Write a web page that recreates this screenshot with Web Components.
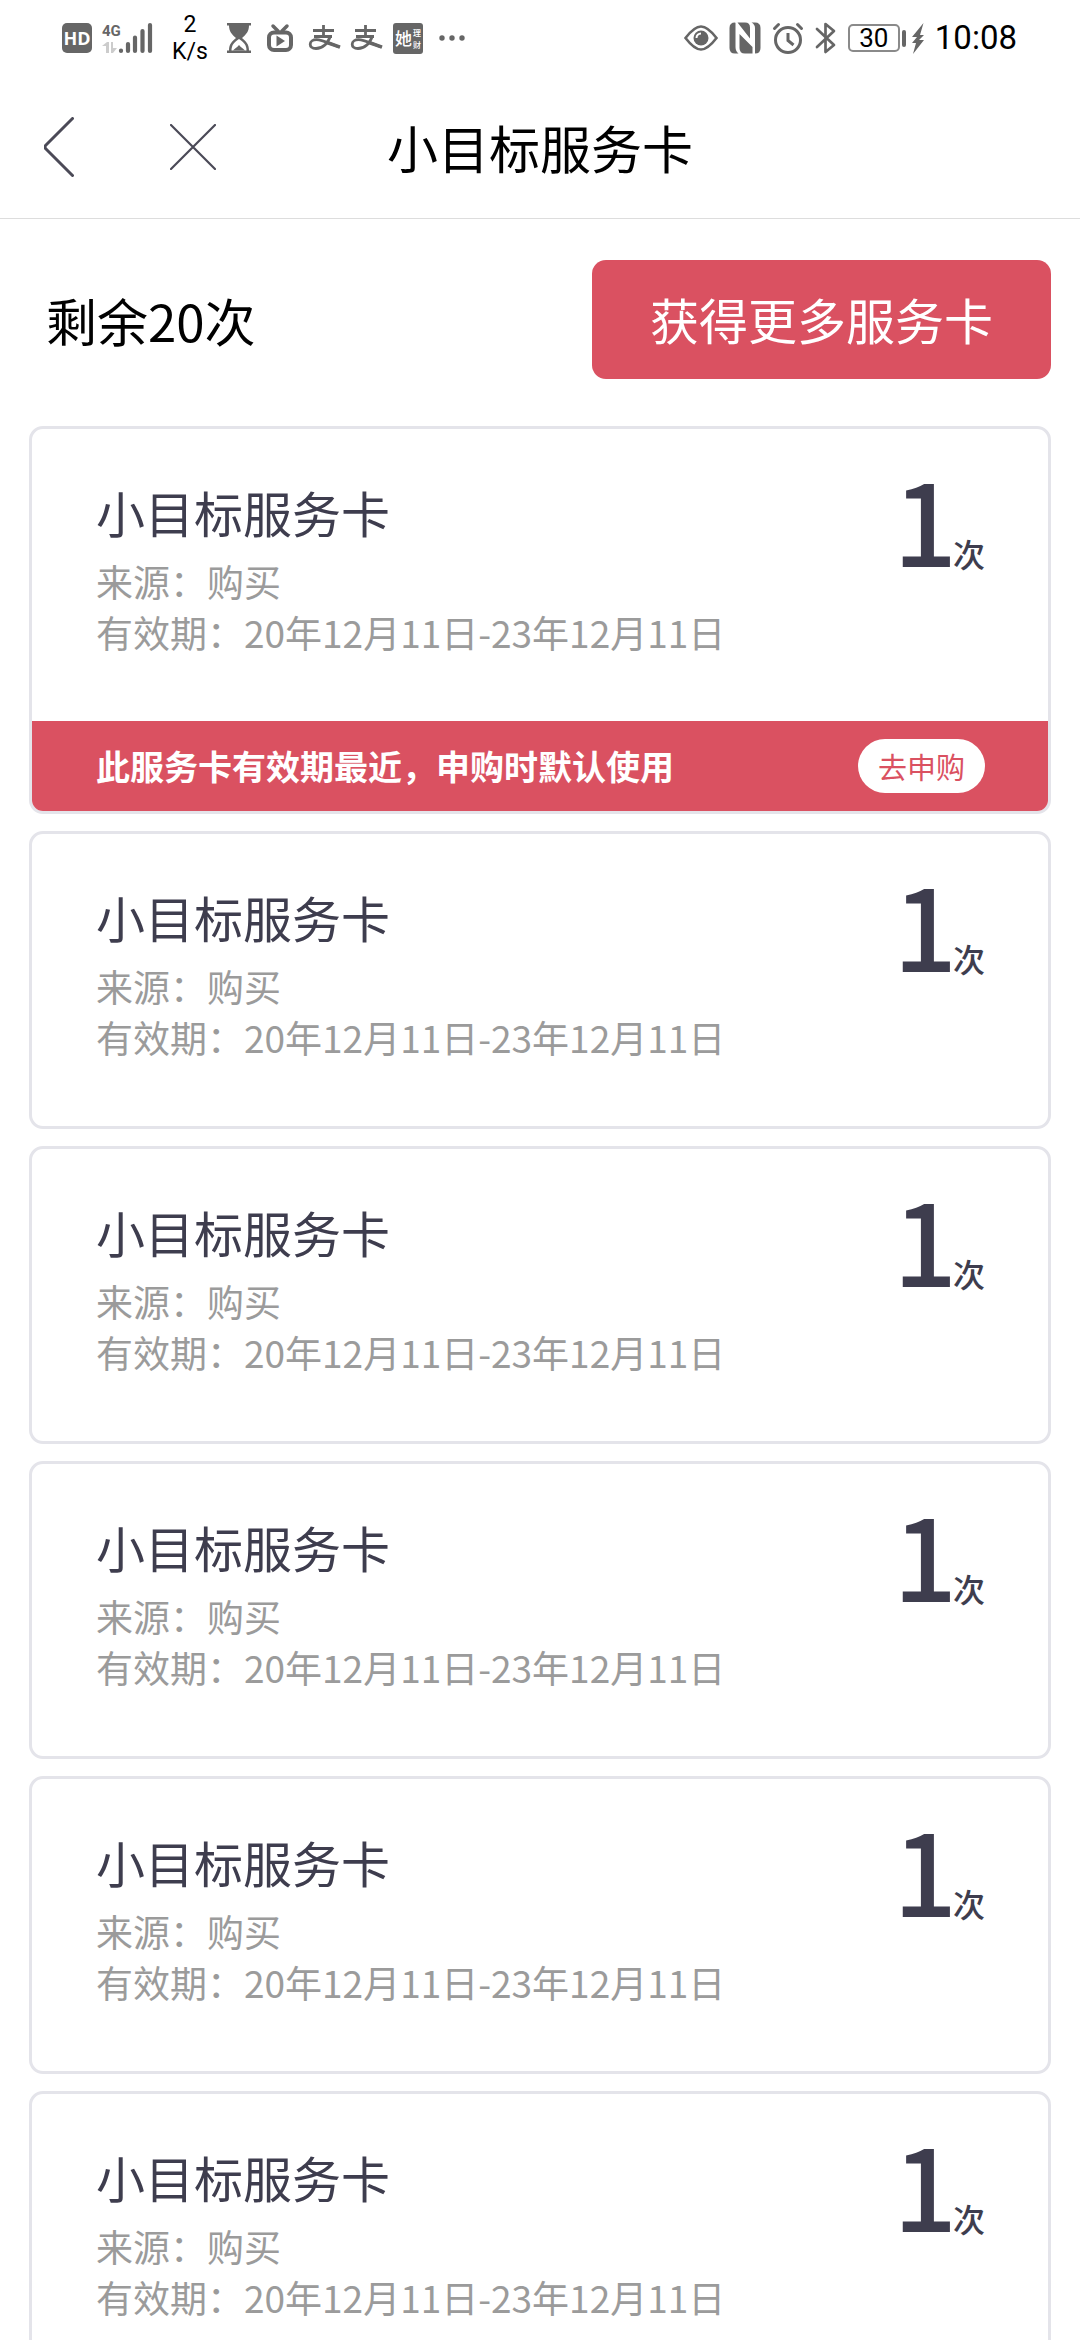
<!DOCTYPE html>
<html lang="zh-CN">
<head>
<meta charset="utf-8">
<meta name="viewport" content="width=device-width, initial-scale=1">
<title>小目标服务卡</title>
<style>
html { scrollbar-width: none; }
body {
  margin: 0;
  background: #fff;
  color: #000;
  font-family: "Noto Sans CJK SC", "Noto Sans", sans-serif;
  --accent: #da5161;
  --ink: #3e3d4e;
  --muted: #9b9b9b;
  --line: #e4e4ea;
}
</style>
</head>
<body>
<service-page></service-page>

<template id="status-tpl">
<style>
:host { display: flex; align-items: center; justify-content: space-between; height: 76px; padding: 0 63px 0 62px; box-sizing: border-box; font-family: Roboto, sans-serif; color: #000; }
.group { display: flex; align-items: center; }
svg { display: block; flex: none; fill: #666; overflow: visible; }
.s { fill: none; stroke: #666; }
.left { gap: 10px; }
.speed { display: flex; flex-direction: column; align-items: center; width: 54px; font-size: 23px; line-height: 27px; }
.apps { display: flex; align-items: center; gap: 16px; }
.logos { display: flex; align-items: center; gap: 10px; }
.right { gap: 11px; }
.power { display: flex; align-items: center; gap: 2px; }
.battery { width: 52px; height: 28px; box-sizing: border-box; border: 2px solid #8a8a8a; border-radius: 5px; font-size: 26px; line-height: 25px; text-align: center; }
.tip { width: 4px; height: 17px; border-radius: 2px; background: #666; margin-right: 4px; }
.time { font-size: 33px; line-height: 40px; }
</style>
<div class="group left">
  <svg width="30" height="30" viewBox="0 0 30 30"><rect width="30" height="30" rx="5"/><text x="15" y="22" text-anchor="middle" font-family="Open Sans" font-weight="700" font-size="18" fill="#fff" stroke="none">HD</text></svg>
  <svg width="51" height="32" viewBox="0 0 51 32">
    <text x="0" y="14" font-family="Roboto" font-weight="700" font-size="15">4G</text>
    <path fill="#ccc" d="M4 31V24H0l5-4h2v11zM9 20h2v6h4l-4 5H9z"/>
    <g class="s" stroke-width="4.2" stroke-linecap="round"><path d="M19 28.500v.5M26 22v7M33 15.500v13.500M40.500 9v20M48 3v26"/></g>
  </svg>
  <div class="speed"><span>2</span><span>K/s</span></div>
  <div class="apps">
    <svg width="24" height="30" viewBox="0 0 24 30"><path d="M0 0h24v2.500h-2c0 6-3 9-7 12.500 4 3.500 7 6 7 12.500h2V30H0v-2.500h2C2 21 5 18.500 9 15 5 11.500 2 8.500 2 2.500H0z"/><path fill="#fff" d="M12 16c-5 3.500-7.500 6-7.500 11.500h15C19.500 22 17 19.500 12 16z"/><path d="M6 27.500c1.500-2 4-3 6-5.500 2 2.500 4.500 3.500 6 5.500z"/></svg>
    <svg width="26" height="28" viewBox="0 0 26 28"><path class="s" stroke-width="3.500" stroke-linecap="round" d="M6 2l5 5M20 2l-5 5"/><rect class="s" x="2" y="8.500" width="22" height="17.500" rx="5" stroke-width="4"/><path d="M9.500 11.500l8.500 5.500-8.500 5.500z"/></svg>
    <div class="logos">
      <svg width="32" height="26" viewBox="0 0 32 26"><g class="s"><path stroke-width="2.800" d="M4 5.500h21M14.500 0v11M5 11.500h18"/><path stroke-width="2.800" d="M21.500 11C18 20 12 23.500 7 23.500c-4 0-5.800-2-5.800-4.300 0-3 3-4.500 6.300-4.500 4 0 10 2.500 23 7.300"/><path stroke-width="3.500" d="M18 17.500l13 4.700"/></g></svg>
      <svg width="32" height="26" viewBox="0 0 32 26"><g class="s"><path stroke-width="2.800" d="M4 5.500h21M14.500 0v11M5 11.500h18"/><path stroke-width="2.800" d="M21.500 11C18 20 12 23.500 7 23.500c-4 0-5.800-2-5.800-4.300 0-3 3-4.500 6.300-4.500 4 0 10 2.500 23 7.300"/><path stroke-width="3.500" d="M18 17.500l13 4.700"/></g></svg>
      <svg width="30" height="31" viewBox="0 0 30 31"><rect width="30" height="31" rx="3"/><g fill="#fff" font-family="Noto Sans CJK SC" font-weight="500"><text x="2" y="22" font-size="17">她</text><text x="20" y="13" font-size="8">理</text><text x="20" y="25" font-size="8">财</text></g></svg>
    </div>
    <svg width="26" height="6" viewBox="0 0 26 6"><circle cx="3" cy="3" r="2.700"/><circle cx="13" cy="3" r="2.700"/><circle cx="23" cy="3" r="2.700"/></svg>
  </div>
</div>
<div class="group right">
  <svg width="34" height="26" viewBox="0 0 34 26"><path class="s" stroke-width="2.600" d="M1.500 13C8 4.500 12 1.500 17 1.500S26 4.500 32.500 13C26 21.500 22 24.500 17 24.500S8 21.500 1.500 13z"/><circle cx="17" cy="13" r="7.500"/><path class="s" style="stroke:#fff" stroke-width="2" d="M12.500 13a4.500 4.500 0 0 1 4.500-4.500"/></svg>
  <svg width="32" height="32" viewBox="0 0 32 32"><path d="M6 .5Q.5.500.500 6v20q0 5.500 5.500 5.500h3.500Q6.500 29 6.500 25V1zM8.500.5H16q5 0 5 5v11zM10.500 12 23.500 25 23.500 31.500H16q-5.500 0-5.500-5.500zM22.500.5H26q5.500 0 5.500 5.500v20q0 5.500-5.500 5.500V6q0-3.500-3.500-5.500z"/></svg>
  <svg width="32" height="32" viewBox="0 0 32 32"><g class="s"><circle cx="16" cy="18" r="12.500" stroke-width="3"/><path stroke-width="3" stroke-linecap="round" d="M2.500 6.500l4-4M29.500 6.500l-4-4"/><path stroke-width="3" d="M16 11v7.500l5.500 4.500"/></g></svg>
  <svg width="22" height="32" viewBox="0 0 22 32"><path class="s" stroke-width="2.700" stroke-linejoin="round" stroke-linecap="round" d="M2 7l17 16-8.500 7V2L19 9 2 25"/></svg>
  <div class="power">
    <div class="battery">30</div><div class="tip"></div>
    <svg width="12" height="31" viewBox="0 0 12 31"><path d="M11.500 0 0 14h5L0 20h4L1 31l11-14H7l5-5H8z"/></svg>
  </div>
  <span class="time">10:08</span>
</div>
</template>

<template id="nav-tpl">
<style>
:host { display: grid; grid-template-columns: 1fr auto 1fr; align-items: center; height: 143px; box-sizing: border-box; border-bottom: 1px solid #ddd; }
nav { display: flex; align-items: center; gap: 72px; padding-left: 32px; }
button { border: 0; background: none; padding: 12px; margin: 0; display: block; }
svg { display: block; fill: none; stroke: #4b4a57; }
h1 { margin: 0; font-size: 51px; line-height: 60px; font-weight: 400; }
</style>
<nav>
  <button aria-label="返回"><svg width="30" height="60" viewBox="0 0 30 60"><path stroke-width="3" stroke-linecap="round" stroke-linejoin="round" d="M28.500 1.500 1.500 28.500Q.500 30 1.500 31.500L28.500 58.500"/></svg></button>
  <button aria-label="关闭"><svg width="46" height="46" viewBox="0 0 46 46"><path stroke-width="2.200" stroke-linecap="round" d="M1 1l44 44M45 1 1 45"/></svg></button>
</nav>
<h1><slot></slot></h1>
</template>

<template id="summary-tpl">
<style>
:host { display: flex; align-items: center; justify-content: space-between; padding: 41px 29px 47px 46px; }
p { margin: 0; font-size: 51px; line-height: 60px; }
button { border: 0; margin: 0; padding: 28px 58px 30px; border-radius: 14px; background: var(--accent); color: #fff; font-family: inherit; font-size: 49px; line-height: 61px; }
</style>
<p><slot></slot></p>
<button>获得更多服务卡</button>
</template>

<template id="card-tpl">
<style>
:host { display: block; border: 3px solid var(--line); border-radius: 14px; overflow: hidden; }
.body { display: flex; justify-content: space-between; align-items: flex-start; padding: 53px 63px 63px 64px; }
h2 { margin: 0 0 14px; font-size: 49px; line-height: 60px; font-weight: 400; color: var(--ink); }
p { margin: 0; font-size: 37px; line-height: 51px; color: var(--muted); }
.count { display: flex; align-items: baseline; color: var(--ink); font-weight: 500; font-size: 112px; line-height: 72px; }
.num { margin-right: -4px; }
.unit { font-size: 32px; }
</style>
<div class="body">
  <div><h2></h2><p class="source"></p><p class="period"></p></div>
  <div class="count"><span class="num"></span><span class="unit">次</span></div>
</div>
<slot></slot>
</template>

<template id="notice-tpl">
<style>
:host { display: flex; align-items: center; justify-content: space-between; height: 90px; padding: 0 63px 0 64px; background: var(--accent); color: #fff; font-size: 34px; line-height: 50px; font-weight: 700; }
button { border: 0; margin: 0; padding: 0 20px; height: 54px; border-radius: 27px; background: #fff; color: var(--accent); font-family: inherit; font-size: 29px; line-height: 50px; }
</style>
<span><slot></slot></span>
<button>去申购</button>
</template>

<template id="page-tpl">
<style>
:host { display: block; }
main { display: flex; flex-direction: column; gap: 17px; padding: 0 29px 17px; }
</style>
<status-bar></status-bar>
<nav-bar>小目标服务卡</nav-bar>
<summary-row>剩余20次</summary-row>
<main></main>
</template>

<script>
class Base extends HTMLElement {
  constructor() {
    super();
    this.attachShadow({ mode: "open" }).append(
      document.getElementById(this.constructor.tpl).content.cloneNode(true));
  }
}
class StatusBar extends Base { static tpl = "status-tpl"; }
class NavBar extends Base { static tpl = "nav-tpl"; }
class SummaryRow extends Base { static tpl = "summary-tpl"; }
class CardNotice extends Base { static tpl = "notice-tpl"; }
class ServiceCard extends Base {
  static tpl = "card-tpl";
  set data(d) {
    const q = s => this.shadowRoot.querySelector(s);
    q("h2").textContent = d.name;
    q(".source").textContent = "来源：" + d.source;
    q(".period").textContent = "有效期：" + d.from + "-" + d.to;
    q(".num").textContent = d.count;
  }
}
class ServicePage extends Base {
  static tpl = "page-tpl";
  connectedCallback() {
    const main = this.shadowRoot.querySelector("main");
    const item = { name: "小目标服务卡", source: "购买", from: "20年12月11日", to: "23年12月11日", count: 1 };
    for (let i = 0; i < 6; i++) {
      const card = document.createElement("service-card");
      card.data = item;
      if (i === 0) {
        const notice = document.createElement("card-notice");
        notice.textContent = "此服务卡有效期最近，申购时默认使用";
        card.append(notice);
      }
      main.append(card);
    }
  }
}
customElements.define("status-bar", StatusBar);
customElements.define("nav-bar", NavBar);
customElements.define("summary-row", SummaryRow);
customElements.define("card-notice", CardNotice);
customElements.define("service-card", ServiceCard);
customElements.define("service-page", ServicePage);
</script>
</body>
</html>
